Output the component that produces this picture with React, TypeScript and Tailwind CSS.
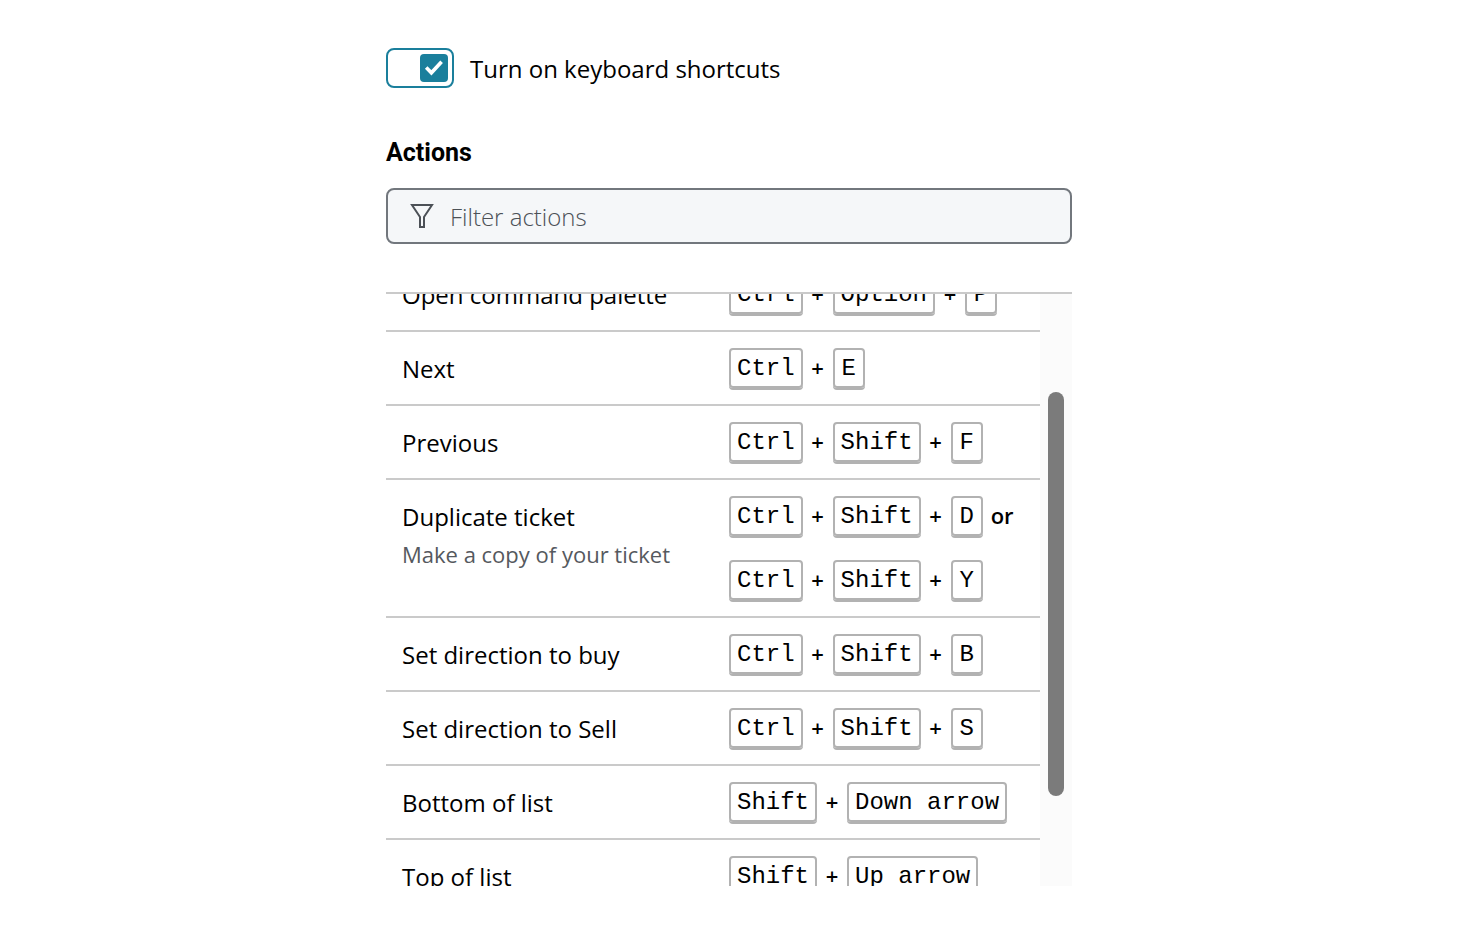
import { Fragment, useLayoutEffect, useRef, useState } from "react";

type Action = {
  name: string;
  description?: string;
  shortcuts: string[][];
};

const actions: Action[] = [
  { name: "Open command palette", shortcuts: [["Ctrl", "Option", "P"]] },
  { name: "Next", shortcuts: [["Ctrl", "E"]] },
  { name: "Previous", shortcuts: [["Ctrl", "Shift", "F"]] },
  {
    name: "Duplicate ticket",
    description: "Make a copy of your ticket",
    shortcuts: [
      ["Ctrl", "Shift", "D"],
      ["Ctrl", "Shift", "Y"],
    ],
  },
  { name: "Set direction to buy", shortcuts: [["Ctrl", "Shift", "B"]] },
  { name: "Set direction to Sell", shortcuts: [["Ctrl", "Shift", "S"]] },
  { name: "Bottom of list", shortcuts: [["Shift", "Down arrow"]] },
  { name: "Top of list", shortcuts: [["Shift", "Up arrow"]] },
];

function Toggle() {
  const [on, setOn] = useState(true);

  return (
    <label className="flex items-center gap-4 self-start">
      <input
        type="checkbox"
        role="switch"
        className="peer sr-only"
        checked={on}
        onChange={(e) => setOn(e.target.checked)}
      />
      <span className="flex h-10 w-[68px] items-center justify-start rounded-lg border-2 border-[#1a7f9c] px-1 peer-checked:justify-end">
        <span className="flex size-7 items-center justify-center rounded bg-[#1a7f9c]">
          {on && (
            <svg viewBox="0 0 28 28" className="size-7" aria-hidden="true">
              <path d="M6.2 13.6 11.4 18.8 21.6 7.8" fill="none" stroke="white" strokeWidth="3.6" />
            </svg>
          )}
        </span>
      </span>
      <span className="pt-0.5">Turn on keyboard shortcuts</span>
    </label>
  );
}

function FilterInput() {
  return (
    <div className="mt-4 flex h-14 shrink-0 items-center gap-4 rounded-lg border-2 border-[#72777d] bg-[#f5f7f9] px-[22px]">
      <svg viewBox="0 0 24 24" className="size-6 shrink-0" aria-hidden="true">
        <path
          d="M2 1H22L14 13V23H10V13Z"
          fill="none"
          stroke="#4c5157"
          strokeWidth="2"
        />
      </svg>
      <input
        type="text"
        aria-label="Filter actions"
        placeholder="Filter actions"
        className="w-full min-w-0 bg-transparent pt-0.5 font-light outline-none placeholder:text-[#4c5157]"
      />
    </div>
  );
}

function Shortcut({ keys, last }: { keys: string[]; last: boolean }) {
  return (
    <div className="flex h-10 items-center gap-2 whitespace-nowrap text-[22px] font-semibold">
      {keys.map((key, i) => (
        <Fragment key={key}>
          {i > 0 && <span className="w-3.5 text-center">+</span>}
          <kbd className="h-10 min-w-8 rounded border-2 border-[#b2b2b2] px-1.5 text-center font-['Liberation_Mono',monospace] text-2xl leading-[38px] font-normal shadow-[0_2px_0_#b2b2b2]">
            {key}
          </kbd>
        </Fragment>
      ))}
      {!last && <span>or</span>}
    </div>
  );
}

function ActionList() {
  const scroller = useRef<HTMLDivElement>(null);

  // start half way through the first row
  useLayoutEffect(() => {
    if (scroller.current) scroller.current.scrollTop = 36;
  }, []);

  return (
    <div className="mt-12 flex min-h-0 flex-1 border-t-2 border-[#cacaca]">
      <div ref={scroller} className="min-w-0 flex-1 overflow-y-auto [scrollbar-width:none]">
        <table className="w-full table-fixed">
          <tbody>
            {actions.map((action) => (
              <tr key={action.name} className="border-b-2 border-[#cacaca] align-top">
                <th scope="row" className="px-4 pt-4 text-left font-normal">
                  <div className="leading-[42px]">{action.name}</div>
                  {action.description && (
                    <div className="text-[22px] leading-8 text-[#55595e]">{action.description}</div>
                  )}
                </th>
                <td className="p-4">
                  <div className="flex flex-col gap-6">
                    {action.shortcuts.map((keys, i) => (
                      <Shortcut
                        key={keys.join("+")}
                        keys={keys}
                        last={i === action.shortcuts.length - 1}
                      />
                    ))}
                  </div>
                </td>
              </tr>
            ))}
          </tbody>
        </table>
      </div>
      <div className="w-8 bg-[#fbfbfb] px-2 pt-[98px]">
        <div className="h-[404px] rounded-full bg-[#7b7b7b]" />
      </div>
    </div>
  );
}

export default function App() {
  return (
    <div className="h-screen bg-white pr-0.5 font-['Open_Sans',sans-serif] text-2xl text-black">
      <main className="mx-auto flex h-full w-full max-w-[686px] flex-col py-12">
        <Toggle />
        <h2 className="mt-12 pb-0.5 font-['Roboto',sans-serif] text-[25px] leading-[34px] font-bold">
          Actions
        </h2>
        <FilterInput />
        <ActionList />
      </main>
    </div>
  );
}
